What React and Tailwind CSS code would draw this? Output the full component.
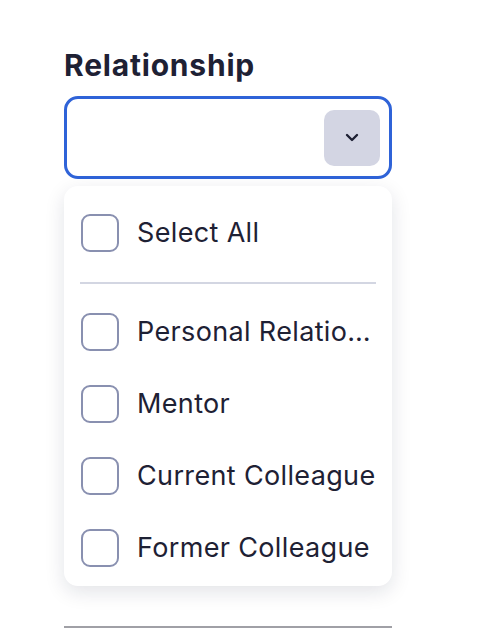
import React from "react";

const options = [
  "Personal Relationship",
  "Mentor",
  "Current Colleague",
  "Former Colleague",
];

const CheckRow = ({ label }) => (
  <label className="flex items-center h-[72px] pl-[17px] pr-4 gap-[18px] cursor-pointer">
    <span className="shrink-0 w-[38px] h-[38px] rounded-[9px] border-[2.5px] border-[#8990b0] bg-white"></span>
    <span className="truncate text-[27px] tracking-[0.35px] text-[#1e2134]">{label}</span>
  </label>
);

export default function App() {
  return (
    <div className="min-h-screen bg-white" style={{ fontFamily: "Inter, 'Noto Sans', sans-serif" }}>
      <div className="ml-[64px] w-[328px] pt-[47px]">
        <h2 className="text-[30px] leading-[36px] tracking-[0.8px] font-bold text-[#1e2134]">Relationship</h2>
        <div className="mt-[13px] h-[83px] rounded-[14px] border-[3px] border-[#2f63d8] flex items-center justify-end pr-[9px]">
          <button className="w-[56px] h-[56px] rounded-[10px] bg-[#d3d5e3] flex items-center justify-center">
            <svg width="14" height="9" viewBox="0 0 14 9" fill="none">
              <path d="M2 2l5 5 5-5" stroke="#1e2134" strokeWidth="2.4" strokeLinecap="round" strokeLinejoin="round" />
            </svg>
          </button>
        </div>
        <div className="mt-[7px] rounded-[14px] bg-white shadow-[0_6px_20px_rgba(20,24,60,0.12)] pt-[11px] pb-[2px]">
          <CheckRow label="Select All" />
          <div className="mx-4 mt-[13px] mb-[12px] h-[2px] bg-[#d3d6e2]"></div>
          {options.map((o) => (
            <CheckRow key={o} label={o} />
          ))}
        </div>
        <div className="mt-[40px] h-[2px] bg-[#a0a0a6]"></div>
      </div>
    </div>
  );
}
